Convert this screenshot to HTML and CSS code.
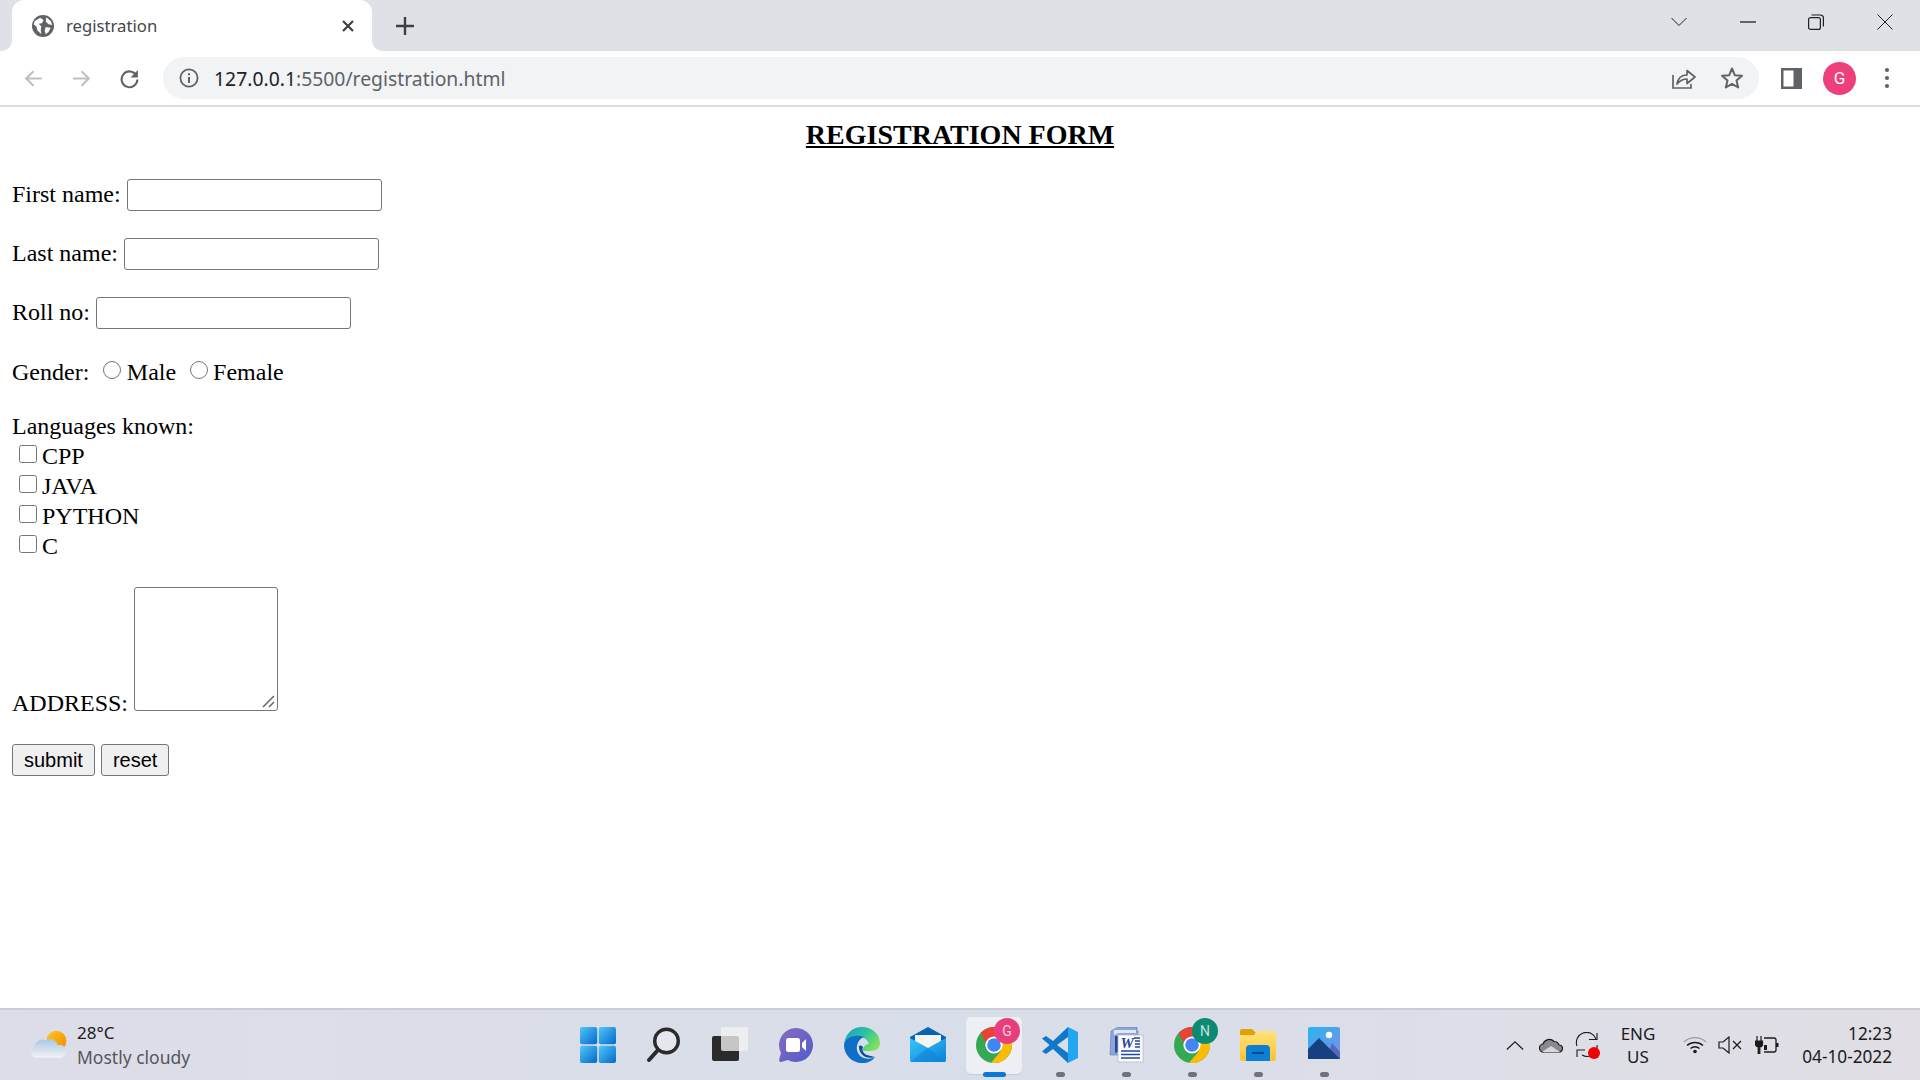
FILE: index.html
```html
<!DOCTYPE html>
<html lang="en">
<head>
<meta charset="utf-8">
<title>registration</title>
<link rel="stylesheet" href="styles.css">
</head>
<body>
<svg class="defs" width="0" height="0">
  <defs>
    <symbol id="chrome" viewBox="0 0 36 36">
      <circle cx="18" cy="18" r="18" fill="#34a853"/>
      <path d="M18 18 18 9H33.6A18 18 0 0 0 4.6 6L11 18Z" fill="#ea4335"/>
      <path d="M18 18 33.6 9A18 18 0 0 1 15 35.8L25 24Z" fill="#fbbc04"/>
      <circle cx="18" cy="18" r="8.6" fill="#fff"/>
      <circle cx="18" cy="18" r="6.8" fill="#4285f4"/>
    </symbol>
    <linearGradient id="winGrad" x1="0" y1="0" x2="1" y2="1"><stop offset="0" stop-color="#4fc6fb"/><stop offset="1" stop-color="#0669c9"/></linearGradient>
    <linearGradient id="edgeGrad" x1="0" y1="0" x2="1" y2="0.6"><stop offset="0" stop-color="#1a9cc9"/><stop offset=".55" stop-color="#2ec2a0"/><stop offset="1" stop-color="#7ee05c"/></linearGradient>
    <linearGradient id="mailGrad" x1="0" y1="0" x2="1" y2="1"><stop offset="0" stop-color="#38c6f8"/><stop offset="1" stop-color="#0d80d8"/></linearGradient>
    <linearGradient id="chatGrad" x1="0" y1="0" x2="1" y2="1"><stop offset="0" stop-color="#8a6cc0"/><stop offset="1" stop-color="#4f5cc8"/></linearGradient>
    <linearGradient id="folderGrad" x1="0" y1="0" x2="0" y2="1"><stop offset="0" stop-color="#ffe27a"/><stop offset="1" stop-color="#fcc430"/></linearGradient>
    <linearGradient id="sunGrad" x1="0" y1="0" x2="1" y2="1"><stop offset="0" stop-color="#ffc91f"/><stop offset="1" stop-color="#f08a00"/></linearGradient>
    <linearGradient id="cloudGrad" x1="0" y1="0" x2="0" y2="1"><stop offset="0" stop-color="#a9c6e2"/><stop offset="1" stop-color="#f2f3f6"/></linearGradient>
    <linearGradient id="skyGrad" x1="0" y1="0" x2="1" y2="1"><stop offset="0" stop-color="#2ab4f0"/><stop offset="1" stop-color="#7a8fe8"/></linearGradient>
  </defs>
</svg>

<header class="tabstrip">
  <div class="tab">
    <svg class="favicon" viewBox="0 0 20 20"><circle cx="10" cy="10" r="10" fill="#5f6368"/><path d="M2.500 5.500 7.500 2.500 10.500 4.500 9 7.500 6 8 8.500 10.500 8 14 8.500 17.500 5 14 4 10.500 1.500 8.500Z M13 2 17 5.500 18.500 9 15 8.500 12.500 6Z M12.500 11 17 11.500 15 15.500 12.500 17.500 11.500 14Z" fill="#fff"/></svg>
    <span class="tab-title">registration</span>
    <svg class="tab-close" viewBox="0 0 12 12"><path d="M1 1 11 11M11 1 1 11" stroke="#3c4043" stroke-width="2.200" fill="none"/></svg>
  </div>
  <svg class="newtab" viewBox="0 0 18 18"><path d="M9 0V18M0 9H18" stroke="#3c4043" stroke-width="2.400" fill="none"/></svg>
  <div class="winctl">
    <svg class="wc wc-chev" viewBox="0 0 16 10"><path d="M.5 1 8 8.500 15.500 1" stroke="#202124" stroke-width="1" fill="none"/></svg>
    <svg class="wc wc-min" viewBox="0 0 16 2"><path d="M0 1H16" stroke="#202124" stroke-width="1.300" fill="none"/></svg>
    <svg class="wc wc-max" viewBox="0 0 16 16"><rect x=".6" y="3.600" width="11.800" height="11.800" rx="2" stroke="#202124" stroke-width="1.200" fill="none"/><path d="M3.500 1H12.500A3 3 0 0 1 15.400 4V12.500" stroke="#202124" stroke-width="1.200" fill="none"/></svg>
    <svg class="wc wc-close" viewBox="0 0 16 16"><path d="M.5.5 15.500 15.500M15.500.5 .5 15.500" stroke="#202124" stroke-width="1" fill="none"/></svg>
  </div>
</header>

<nav class="toolbar">
  <svg class="tb-btn" viewBox="0 0 20 20"><path d="M18 10H3M10 3 3 10 10 17" stroke="#bdc1c6" stroke-width="2" fill="none"/></svg>
  <svg class="tb-btn" viewBox="0 0 20 20"><path d="M2 10H17M10 3 17 10 10 17" stroke="#bdc1c6" stroke-width="2" fill="none"/></svg>
  <svg class="tb-btn" viewBox="0 0 20 20"><path d="M16.500 7A7.500 7.500 0 1 0 17.500 11" stroke="#5f6368" stroke-width="2" fill="none"/><path d="M18 2V9H11Z" fill="#5f6368"/></svg>
  <div class="omnibox">
    <svg class="info" viewBox="0 0 20 20"><circle cx="10" cy="10" r="8.600" stroke="#5f6368" stroke-width="1.800" fill="none"/><path d="M10 9V15M10 5.300V7.300" stroke="#5f6368" stroke-width="2" fill="none"/></svg>
    <span class="url"><span class="url-host">127.0.0.1</span>:5500/registration.html</span>
    <svg class="omni-icon share" viewBox="0 0 24 24"><path d="M1 9V22H19V18" stroke="#5f6368" stroke-width="1.700" fill="none"/><path d="M5 18C6 12 10 9 15 9V4.500L23 11 15 17.500V13C11 13 8 14.500 5 18Z" stroke="#5f6368" stroke-width="1.700" fill="none" stroke-linejoin="round"/></svg>
    <svg class="omni-icon star" viewBox="0 0 24 24"><path d="M12 2.500 14.800 9.200 22 9.800 16.500 14.500 18.200 21.500 12 17.800 5.800 21.500 7.500 14.500 2 9.800 9.200 9.200Z" stroke="#5f6368" stroke-width="2" fill="none" stroke-linejoin="round"/></svg>
  </div>
  <svg class="panel" viewBox="0 0 21 21"><rect width="21" height="21" fill="#5f6368"/><rect x="2.500" y="2.500" width="10" height="16" fill="#fff"/></svg>
  <div class="avatar">G</div>
  <svg class="kebab" viewBox="0 0 6 22"><circle cx="3" cy="3" r="2.100" fill="#5f6368"/><circle cx="3" cy="11" r="2.100" fill="#5f6368"/><circle cx="3" cy="19" r="2.100" fill="#5f6368"/></svg>
</nav>

<main class="page">
  <h3 class="title">REGISTRATION FORM</h3>
  <form class="form">
    <div class="row">First name: <input class="field" type="text"></div>
    <div class="row">Last name: <input class="field" type="text"></div>
    <div class="row">Roll no: <input class="field" type="text"></div>
    <div class="row gender">Gender: <input class="radio first" type="radio" name="g">Male <input class="radio" type="radio" name="g">Female</div>
    <div class="langs">
      <div class="lang-head">Languages known:</div>
      <div class="lang"><input class="check" type="checkbox"> CPP</div>
      <div class="lang"><input class="check" type="checkbox"> JAVA</div>
      <div class="lang"><input class="check" type="checkbox"> PYTHON</div>
      <div class="lang"><input class="check" type="checkbox"> C</div>
    </div>
    <div class="addr">ADDRESS: <textarea class="area"></textarea></div>
    <div class="btns"><button class="btn" type="button">submit</button><button class="btn" type="button">reset</button></div>
  </form>
</main>

<footer class="taskbar">
  <div class="weather">
    <svg class="wx" viewBox="0 0 36 28"><circle cx="25" cy="11" r="9.500" fill="url(#sunGrad)"/><path d="M6 27A5.500 5.500 0 0 1 4 16.500 8 8 0 0 1 15 10.500 7 7 0 0 1 26 15 6 6 0 0 1 30 27Z" fill="url(#cloudGrad)"/></svg>
    <div class="wx-text"><div class="wx-temp">28°C</div><div class="wx-desc">Mostly cloudy</div></div>
  </div>
  <div class="apps">
    <div class="app"><svg class="ico" viewBox="0 0 36 36"><rect width="17.200" height="17.200" rx="2" fill="url(#winGrad)"/><rect x="18.800" width="17.200" height="17.200" rx="2" fill="url(#winGrad)"/><rect y="18.800" width="17.200" height="17.200" rx="2" fill="url(#winGrad)"/><rect x="18.800" y="18.800" width="17.200" height="17.200" rx="2" fill="url(#winGrad)"/></svg></div>
    <div class="app"><svg class="ico" viewBox="0 0 36 36"><circle cx="20.500" cy="14" r="11.800" stroke="#2a2a2c" stroke-width="3.400" fill="#e6e6ee"/><path d="M12 23 3 33" stroke="#2a2a2c" stroke-width="4" stroke-linecap="round"/></svg></div>
    <div class="app"><svg class="ico" viewBox="0 0 36 36"><rect y="9" width="27" height="25" rx="2" fill="#2b2b2b"/><rect x="9" width="27" height="24" rx="2" fill="#f2f2f2" fill-opacity=".78"/></svg></div>
    <div class="app"><svg class="ico" viewBox="0 0 36 36"><path d="M18 1A17 17 0 1 1 10 33L3 35C1 35 1 33 1.500 31L3 26A17 17 0 0 1 18 1Z" fill="url(#chatGrad)"/><rect x="8" y="11" width="14" height="14" rx="2.500" fill="#fff"/><path d="M24 16 28 12V24L24 20Z" fill="#fff"/></svg></div>
    <div class="app"><svg class="ico" viewBox="0 0 36 36"><path d="M0 18C1 7 8 0 18 0 28 0 36 7 36 16 36 21 32 24 27 24H19C18 21 21 17 25 17 23 11 17 9 11 10 5 11 1 14 0 18Z" fill="url(#edgeGrad)"/><path d="M0 18C0 28 8 36 18 36 24 36 28 34 31 30 25 33 17 32 14 26 11 20 14 12 20 10 12 7 1 10 0 18Z" fill="#0f6fc6"/><path d="M15 20C15 27 22 33 31 30 29 29 22 29 20 26 18 24 18 22 19 20 17 18 15 18 15 20Z" fill="#0a4d96"/></svg></div>
    <div class="app"><svg class="ico" viewBox="0 0 36 36"><path d="M0 10 18 0 36 10V33H0Z" fill="#0664b4"/><path d="M5 8H31V24H5Z" fill="#f5f5f5"/><path d="M0 11 18 21 36 11V33A2 2 0 0 1 34 35H2A2 2 0 0 1 0 33Z" fill="url(#mailGrad)"/><path d="M0 35 18 21 36 35Z" fill="#0d86dc" fill-opacity=".6"/></svg></div>
    <div class="app active"><span class="badged"><svg class="ico"><use href="#chrome"/></svg><svg class="badge" viewBox="0 0 26 26"><circle cx="13" cy="13" r="13" fill="#e83f7c"/><text x="13" y="18" class="badge-text">G</text></svg></span><i class="run on"></i></div>
    <div class="app"><svg class="ico" viewBox="0 0 36 36"><path d="M26 0 36 5V31L26 36Z" fill="#23a5f1"/><path d="M26 0V10L15 18 26 26V36L11 22 4 27 0 24.500 7.500 18 0 11.500 4 9 11 14Z" fill="#0f78c8"/></svg><i class="run"></i></div>
    <div class="app"><svg class="ico" viewBox="0 0 36 36"><path d="M3 4 10 0H29V4H30V28H2Z" fill="#8fa6d4" stroke="#5c7cbc" stroke-width=".6"/><path d="M6 3H28V6H11L6 8Z" fill="#dfe7f4"/><path d="M7 9H12V24L7 26Z" fill="#23479a"/><rect x="10" y="8" width="25" height="27" fill="#fbfbfd" stroke="#b8bcc8" stroke-width=".8"/><text x="12.500" y="21" class="word-w">W</text><path d="M26 11H32M27 14H32M27 17H32M27 20H32M13 24H32M13 27.500H32M13 31H32" stroke="#23479a" stroke-width="1.500"/></svg><i class="run"></i></div>
    <div class="app"><span class="badged"><svg class="ico"><use href="#chrome"/></svg><svg class="badge" viewBox="0 0 26 26"><circle cx="13" cy="13" r="13" fill="#0c8a73"/><text x="13" y="18" class="badge-text">N</text></svg></span><i class="run"></i></div>
    <div class="app"><svg class="ico" viewBox="0 0 36 36"><path d="M0 4A2 2 0 0 1 2 2H12L16 6H34A2 2 0 0 1 36 8V12H0Z" fill="#dfa200"/><path d="M0 8H14L17 4H34A2 2 0 0 1 36 6V32A2 2 0 0 1 34 34H2A2 2 0 0 1 0 32Z" fill="url(#folderGrad)"/><path d="M6 34V22A4 4 0 0 1 10 18H26A4 4 0 0 1 30 22V34Z" fill="#0c7fd4"/><rect x="12" y="25" width="12" height="2" fill="#0a4d8c"/></svg><i class="run"></i></div>
    <div class="app"><svg class="ico" viewBox="0 0 36 36"><rect x="2" y="0" width="32" height="32" rx="2" fill="url(#skyGrad)"/><circle cx="23" cy="8" r="3.200" fill="#fff"/><path d="M2 32V22L13 11 24 22 26 18 34 26V32Z" fill="#16407f"/><path d="M24 22 26 16 34 25V32Z" fill="#5a66b8"/></svg><i class="run"></i></div>
  </div>
  <div class="tray">
    <svg class="tr chev" viewBox="0 0 20 10"><path d="M1 9.500 10 1 19 9.500" stroke="#1c1c1c" stroke-width="1.300" fill="none"/></svg>
    <svg class="tr cloud" viewBox="0 0 24 16"><path d="M5 15A4 4 0 0 1 4 7 6.500 6.500 0 0 1 15 4.500 5 5 0 0 1 20 8 3.500 3.500 0 0 1 20 15Z" fill="#8a8a8e" stroke="#1c1c1c" stroke-width="1.200"/><path d="M3 15 12 9 21 15Z" fill="#d8d8dc"/></svg>
    <span class="sync">
      <svg class="tr syncico" viewBox="0 0 24 26"><path d="M2 14A10 10 0 0 1 21 7M22 13A10 10 0 0 1 7 23" stroke="#1c1c1c" stroke-width="1.100" fill="none"/><path d="M14 7.500H22V1M10 18H2V25" stroke="#1c1c1c" stroke-width="1.100" fill="none"/></svg>
      <i class="rec"></i>
    </span>
    <div class="lang-ind"><div>ENG</div><div>US</div></div>
    <svg class="tr wifi" viewBox="0 0 24 18"><path d="M1 6A16 16 0 0 1 23 6" stroke="#9a9aa2" stroke-width="1.300" fill="none"/><path d="M4 9.500A12 12 0 0 1 20 9.500M7.500 12.500A7 7 0 0 1 16.500 12.500" stroke="#1c1c1c" stroke-width="1.500" fill="none"/><circle cx="12" cy="15.500" r="1.800" fill="#1c1c1c"/></svg>
    <svg class="tr sound" viewBox="0 0 24 18"><path d="M1 6H5L11 1V17L5 12H1Z" stroke="#1c1c1c" stroke-width="1.200" fill="none"/><path d="M15 5 23 13M23 5 15 13" stroke="#1c1c1c" stroke-width="1.200" fill="none"/></svg>
    <svg class="tr batt" viewBox="0 0 24 18"><path d="M9 2H19A2 2 0 0 1 21 4V14A2 2 0 0 1 19 16H9" stroke="#1c1c1c" stroke-width="1.300" fill="none"/><rect x="21" y="7" width="2.500" height="4" fill="#1c1c1c"/><path d="M2 0V5M6 0V5M.5 5H7.500V8A3 3 0 0 1 4.800 11V18H3.200V11A3 3 0 0 1 .5 8Z" stroke="#1c1c1c" stroke-width="1.200" fill="#1c1c1c"/><path d="M9 9H12V14H9Z" fill="#1c1c1c"/></svg>
    <div class="clock"><div>12:23</div><div>04-10-2022</div></div>
  </div>
</footer>
</body>
</html>
```

FILE: styles.css
```css
* { box-sizing: border-box; }
html, body { height: 100%; }
body {
  margin: 0;
  display: flex;
  flex-direction: column;
  height: 1080px;
  overflow: hidden;
  background: #fff;
  color: #000;
  font-family: "Liberation Serif", serif;
}
.defs { position: absolute; }

/* Browser chrome */
.tabstrip {
  height: 51px;
  flex: none;
  background: #dee1e6;
  display: flex;
  align-items: center;
  padding-left: 12px;
  font-family: "Noto Sans", sans-serif;
}
.tab {
  position: relative;
  width: 360px;
  height: 51px;
  background: #fff;
  border-radius: 12px 12px 0 0;
  display: flex;
  align-items: center;
  padding: 0 18px 0 20px;
}
.tab::before, .tab::after {
  content: "";
  position: absolute;
  bottom: 0;
  width: 10px;
  height: 10px;
  background: radial-gradient(circle at 0 0, #dee1e6 9.500px, #fff 10px);
}
.tab::before { left: -10px; }
.tab::after { right: -10px; background: radial-gradient(circle at 100% 0, #dee1e6 9.500px, #fff 10px); }
.favicon { width: 22px; height: 22px; flex: none; }
.tab-title { margin-left: 12px; font-size: 16.700px; color: #45474a; flex: 1; }
.tab-close { width: 12px; height: 12px; flex: none; }
.newtab { width: 18px; height: 18px; margin-left: 24px; flex: none; }
.winctl {
  margin-left: auto;
  display: flex;
  align-items: center;
  height: 100%;
  padding-right: 27px;
  padding-bottom: 8px;
}
.wc { flex: none; display: block; }
.wc-chev { width: 16px; height: 10px; }
.wc-min { width: 16px; height: 2px; margin-left: 53px; }
.wc-max { width: 16px; height: 16px; margin-left: 52px; }
.wc-close { width: 16px; height: 16px; margin-left: 53px; }

.toolbar {
  height: 56px;
  flex: none;
  background: #fff;
  border-bottom: 2px solid #dadce0;
  display: flex;
  align-items: center;
  padding-left: 23px;
}
.tb-btn { width: 21px; height: 21px; flex: none; margin-right: 27px; }
.omnibox {
  width: 1596px;
  height: 42px;
  margin-left: -4px;
  background: #f1f3f4;
  border-radius: 21px;
  display: flex;
  align-items: center;
  padding-left: 16px;
  font-family: "Noto Sans", sans-serif;
  flex: none;
}
.info { width: 20px; height: 20px; flex: none; }
.url { margin-left: 15px; font-size: 19.350px; color: #5f6368; }
.url-host { color: #202124; }
.omni-icon { width: 24px; height: 24px; flex: none; }
.share { margin-left: auto; }
.star { margin-left: 24px; margin-right: 15px; }
.panel { width: 21px; height: 21px; margin-left: 22px; flex: none; }
.avatar {
  width: 33px;
  height: 33px;
  margin-left: 21px;
  border-radius: 50%;
  background: #ee3f7c;
  color: #fff;
  font: 17px Roboto, sans-serif;
  display: flex;
  align-items: center;
  justify-content: center;
  flex: none;
}
.kebab { width: 6px; height: 22px; margin-left: 28px; flex: none; }

/* Page */
.page {
  flex: 1;
  padding: 12px;
  font-size: 24px;
  min-height: 0;
}
.title {
  margin: 0;
  font-size: 28px;
  line-height: 32px;
  font-weight: bold;
  text-align: center;
  text-decoration: underline;
}
.row { margin-bottom: 24px; height: 35px; }
.row:first-child { margin-top: 28px; }
.field {
  width: 255px;
  height: 32px;
  border: 1px solid #767676;
  border-radius: 3px;
  padding: 2px 3px;
  background: #fff;
  margin: 0;
  vertical-align: 2px;
}
.gender { height: 28px; margin-top: 27px; margin-bottom: 24px; }
.radio { width: 18px; height: 18px; margin: 0 5.500px 0 7.500px; vertical-align: 1px; }
.radio.first { margin-left: 8px; }
.langs { margin-bottom: 26px; }
.lang-head { line-height: 30px; }
.lang { line-height: 30px; height: 30px; padding-left: 7px; }
.check { width: 18px; height: 18px; margin: 0 -1px 0 0; vertical-align: 1px; }
.addr { line-height: 28px; }
.area {
  display: inline-block;
  width: 144px;
  height: 124px;
  margin: 0;
  border: 1px solid #767676;
  border-radius: 3px;
  vertical-align: baseline;
  resize: none;
  background: #fff url("data:image/svg+xml,%3Csvg xmlns='http://www.w3.org/2000/svg' width='14' height='14'%3E%3Cpath d='M1 12 12 1M7 12 12 7' stroke='%23666' stroke-width='1.500' fill='none'/%3E%3C/svg%3E") no-repeat right 1px bottom 1px;
}
.btns { display: flex; gap: 6px; margin-top: 27px; }
.btn {
  height: 32px;
  padding: 0 11px;
  margin: 0;
  font: 20px "Liberation Sans", Arial, sans-serif;
  color: #000;
  background: #efefef;
  border: 1px solid #767676;
  border-radius: 3px;
}

/* Taskbar */
.taskbar {
  height: 72px;
  flex: none;
  border-top: 2px solid #cbccd6;
  background: linear-gradient(90deg, #dddde8 0%, #d8dee9 50%, #e1dee5 100%);
  display: flex;
  align-items: stretch;
  font-family: "Noto Sans", sans-serif;
  color: #1b1b1b;
}
.weather {
  width: 565px;
  flex: none;
  display: flex;
  align-items: center;
  padding-left: 30px;
}
.wx { width: 38px; height: 30px; flex: none; margin-bottom: 2px; }
.wx-text { margin-left: 9px; }
.wx-temp { font-size: 17px; line-height: 24px; }
.wx-desc { font-size: 17.500px; line-height: 24px; color: #55565a; }
.apps { display: flex; width: 794px; flex: none; }
.app {
  position: relative;
  width: 66px;
  height: 100%;
  flex: none;
  display: flex;
  align-items: center;
  justify-content: center;
}
.app.active::before {
  content: "";
  position: absolute;
  left: 5px;
  right: 5px;
  top: 7px;
  bottom: 6px;
  background: #eeeff4;
  border-radius: 5px;
  box-shadow: 0 1px 1px #c8cad2;
}
.ico { width: 36px; height: 36px; display: block; position: relative; }
.badged { position: relative; display: block; }
.badge { position: absolute; width: 26px; height: 26px; right: -8px; top: -9px; }
.badge-text { font: 14px Roboto, sans-serif; fill: #fff; fill-opacity: .75; text-anchor: middle; }
.word-w { font: italic bold 15px "Liberation Serif", serif; fill: #23479a; }
.run {
  position: absolute;
  left: 50%;
  bottom: 3px;
  width: 9px;
  height: 5px;
  margin-left: -4.500px;
  border-radius: 3px;
  background: #6f727a;
}
.run.on { width: 23px; margin-left: -11.500px; background: #0a78d4; }
.tray {
  flex: 1;
  display: flex;
  align-items: center;
  position: relative;
  padding-left: 147px;
}
.tr { display: block; flex: none; }
.chev { width: 18px; height: 9px; }
.cloud { width: 24px; height: 16px; margin-left: 15px; }
.sync { position: relative; display: block; margin-left: 12px; flex: none; }
.syncico { width: 24px; height: 26px; }
.rec { position: absolute; width: 12px; height: 12px; border-radius: 50%; background: #f00007; right: -1px; bottom: -1px; }
.lang-ind { width: 60px; margin-left: 9px; text-align: center; font-size: 17px; line-height: 23px; flex: none; }
.wifi { width: 24px; height: 18px; margin-left: 15px; }
.sound { width: 24px; height: 18px; margin-left: 11px; }
.batt { width: 24px; height: 18px; margin-left: 13px; }
.clock { margin-left: auto; margin-right: 28px; text-align: right; font-size: 17.200px; line-height: 23px; flex: none; }
```
